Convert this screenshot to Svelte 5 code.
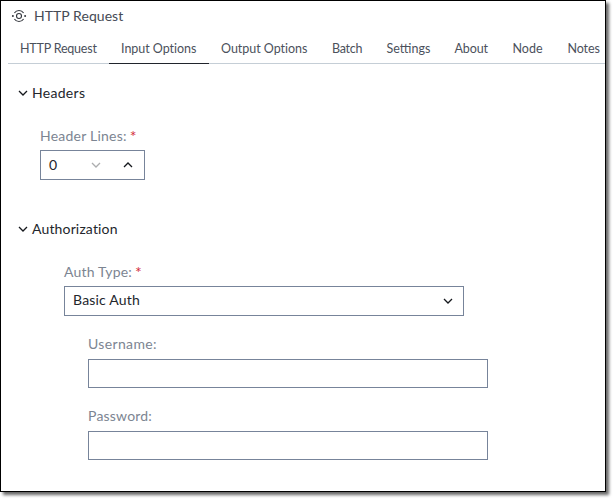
<script>
  const tabs = [
    { label: 'HTTP Request', width: 101, spacing: -0.2 },
    { label: 'Input Options', width: 100, spacing: -0.03 },
    { label: 'Output Options', width: 111, spacing: -0.03 },
    { label: 'Batch', width: 54.5, spacing: -0.25 },
    { label: 'Settings', width: 68, spacing: 0 },
    { label: 'About', width: 58, spacing: -0.1 },
    { label: 'Node', width: 55, spacing: 0 },
    { label: 'Notes', width: 58, spacing: -0.1 }
  ];
  let active = $state('Input Options');
  let username = $state('');
  let password = $state('');
</script>

{#snippet chevron(up = false)}
  <svg class="chevron" width="10" height="8" viewBox="0 0 10 8" aria-hidden="true">
    <path d={up ? 'M1 6 5 2 9 6' : 'M1 2 5 6 9 2'} />
  </svg>
{/snippet}

<div class="page">
<main class="panel">
  <header>
    <svg class="logo" width="16" height="16" viewBox="0 0 16 16" aria-hidden="true">
      <circle cx="8" cy="8" r="2.5" />
      <path d="M3.4 5A5.5 5.5 0 0 1 12.6 5M3.4 11A5.5 5.5 0 0 0 12.6 11" />
      <circle class="dot" cx="1.9" cy="8" r="1" />
      <circle class="dot" cx="14.1" cy="8" r="1" />
    </svg>
    <h1>HTTP Request</h1>
  </header>

  <nav>
    {#each tabs as tab}
      <button
        class:active={active === tab.label}
        style="width: {tab.width}px; letter-spacing: {tab.spacing}px"
        onclick={() => (active = tab.label)}>{tab.label}</button>
    {/each}
  </nav>

  <section class="headers">
    <h2>{@render chevron()}<span class="t-headers">Headers</span></h2>
    <div class="field lines">
      <div class="label"><span class="t-lines">Header Lines:</span><span class="req">*</span></div>
      <div class="box spinner">
        <span class="value">0</span>
        <span class="muted">{@render chevron()}</span>
        <span>{@render chevron(true)}</span>
      </div>
    </div>
  </section>

  <section class="auth">
    <h2>{@render chevron()}<span class="t-auth">Authorization</span></h2>
    <div class="field type">
      <div class="label"><span class="t-type">Auth Type:</span><span class="req">*</span></div>
      <div class="box select"><span class="t-basic">Basic Auth</span>{@render chevron()}</div>
    </div>
    <div class="field credential">
      <label class="label" for="user"><span class="t-user">Username:</span></label>
      <input id="user" class="box" bind:value={username} />
    </div>
    <div class="field credential">
      <label class="label" for="pass"><span class="t-pass">Password:</span></label>
      <input id="pass" class="box" type="password" bind:value={password} />
    </div>
  </section>
</main>
</div>

<style>
  :global(body) { background: #fff; }
  .page { height: 500px; overflow: hidden; }
  .panel {
    box-sizing: border-box;
    width: 606px;
    height: 492px;
    border: 1px solid #000;
    background: #fff;
    box-shadow: 3px 3px 3px rgba(0, 0, 0, 0.6);
    font: 14px/20px Lato, "Open Sans", sans-serif;
    color: #23262c;
  }
  header { display: flex; align-items: center; height: 30px; padding-left: 10px; }
  .logo { fill: none; stroke: #33363d; stroke-width: 1.1; }
  .logo .dot { fill: #33363d; stroke: none; }
  h1, h2 { margin: 0; font-size: 14px; font-weight: 400; }
  h1 { margin-left: 7px; letter-spacing: 0.05px; color: #464b55; }
  nav {
    display: flex;
    height: 33px;
    margin-left: 7px;
    overflow: hidden;
    box-shadow: inset 0 -1px #c5ced6;
  }
  nav button {
    flex: none;
    height: 33px;
    padding: 2px 0 0 12px;
    border: 0;
    background: none;
    text-align: left;
    white-space: nowrap;
    font: 12.5px/30px Lato, "Open Sans", sans-serif;
    color: #4b515c;
  }
  nav button.active { box-shadow: inset 0 -1px #20242c; }
  h2 { display: flex; align-items: center; gap: 4px; height: 20px; padding-left: 17px; }
  .chevron { flex: none; fill: none; stroke: #15181d; stroke-width: 1.3; }
  .headers { padding-top: 19px; height: 117px; }
  .auth { padding-top: 19px; }
  .field { display: flex; flex-direction: column; }
  .lines { margin: 23px 0 0 39px; }
  .type { margin: 23px 0 0 63px; }
  .credential { margin: 18px 0 0 87px; }
  .label { display: flex; height: 20px; margin-bottom: 4px; color: #7c8592; }
  .req { margin-left: 3px; color: #d32f3c; font-size: 16px; }
  .box {
    box-sizing: border-box;
    width: 400px;
    height: 30px;
    border: 1px solid #77849a;
    background: #fff;
    border-radius: 0;
    padding: 0 8px;
    outline: none;
  }
  .credential .label { margin-bottom: 5px; }
  .credential .box { height: 29px; }
  .spinner { display: flex; align-items: center; width: 105px; }
  .spinner span { display: flex; }
  .spinner .value { width: 42px; }
  .spinner .muted { width: 32px; opacity: 0.35; }
  .select { display: flex; align-items: center; justify-content: space-between; padding: 0 10px 2px 8px; }
  .select .chevron { position: relative; top: 1px; }
  .t-headers { letter-spacing: 0.3px; }
  .t-auth { letter-spacing: 0.15px; }
  .t-lines { letter-spacing: 0.23px; }
  .t-type { letter-spacing: 0.18px; }
  .t-basic { letter-spacing: 0.2px; }
  .t-user { letter-spacing: 0.35px; }
  .t-pass { letter-spacing: 0.2px; }
</style>
